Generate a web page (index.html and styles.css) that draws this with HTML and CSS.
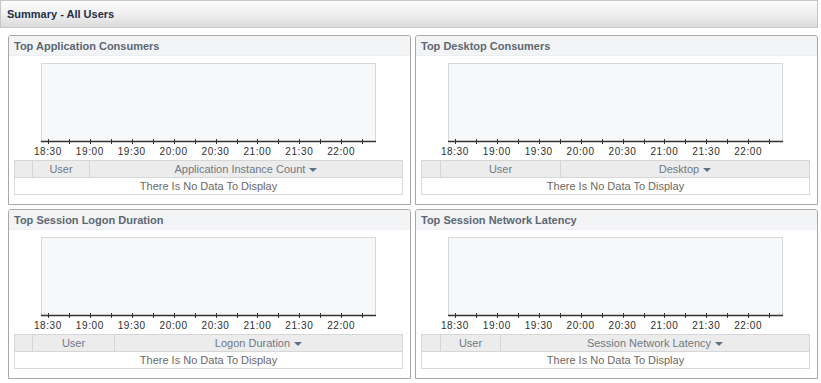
FILE: index.html
```html
<!DOCTYPE html>
<html>
<head>
<meta charset="utf-8">
<link rel="stylesheet" href="styles.css">
</head>
<body>
<div class="page">
  <div class="titlebar">Summary - All Users</div>
  <div class="grid">
    <section class="panel">
      <div class="panel-head">Top Application Consumers</div>
      <div class="chart">
        <div class="plot"></div>
        <svg class="axis" width="335" height="7" viewBox="0 0 335 7"><path d="M0 3.5H335" stroke="#333" stroke-width="1.3"/><path d="M7.5 1V6M28.5 1V6M49.5 1V6M70.5 1V6M91.5 1V6M112.5 1V6M133.5 1V6M154.5 1V6M175.5 1V6M196.5 1V6M216.5 1V6M237.5 1V6M258.5 1V6M279.5 1V6M300.5 1V6M321.5 1V6" stroke="#333" stroke-width="1"/></svg>
        <div class="labels"><span>18:30</span><span>19:00</span><span>19:30</span><span>20:00</span><span>20:30</span><span>21:00</span><span>21:30</span><span>22:00</span></div>
      </div>
      <table class="grid-table">
        <colgroup><col class="c-sel"><col class="c-user-a"><col></colgroup>
        <tr class="hdr"><th></th><th>User</th><th>Application Instance Count <i class="arrow"></i></th></tr>
        <tr class="row"><td colspan="3">There Is No Data To Display</td></tr>
      </table>
    </section>
    <section class="panel">
      <div class="panel-head">Top Desktop Consumers</div>
      <div class="chart">
        <div class="plot"></div>
        <svg class="axis" width="335" height="7" viewBox="0 0 335 7"><path d="M0 3.5H335" stroke="#333" stroke-width="1.3"/><path d="M7.5 1V6M28.5 1V6M49.5 1V6M70.5 1V6M91.5 1V6M112.5 1V6M133.5 1V6M154.5 1V6M175.5 1V6M196.5 1V6M216.5 1V6M237.5 1V6M258.5 1V6M279.5 1V6M300.5 1V6M321.5 1V6" stroke="#333" stroke-width="1"/></svg>
        <div class="labels"><span>18:30</span><span>19:00</span><span>19:30</span><span>20:00</span><span>20:30</span><span>21:00</span><span>21:30</span><span>22:00</span></div>
      </div>
      <table class="grid-table">
        <colgroup><col class="c-sel2"><col class="c-user-b"><col></colgroup>
        <tr class="hdr"><th></th><th>User</th><th>Desktop <i class="arrow"></i></th></tr>
        <tr class="row"><td colspan="3">There Is No Data To Display</td></tr>
      </table>
    </section>
    <section class="panel">
      <div class="panel-head">Top Session Logon Duration</div>
      <div class="chart">
        <div class="plot"></div>
        <svg class="axis" width="335" height="7" viewBox="0 0 335 7"><path d="M0 3.5H335" stroke="#333" stroke-width="1.3"/><path d="M7.5 1V6M28.5 1V6M49.5 1V6M70.5 1V6M91.5 1V6M112.5 1V6M133.5 1V6M154.5 1V6M175.5 1V6M196.5 1V6M216.5 1V6M237.5 1V6M258.5 1V6M279.5 1V6M300.5 1V6M321.5 1V6" stroke="#333" stroke-width="1"/></svg>
        <div class="labels"><span>18:30</span><span>19:00</span><span>19:30</span><span>20:00</span><span>20:30</span><span>21:00</span><span>21:30</span><span>22:00</span></div>
      </div>
      <table class="grid-table">
        <colgroup><col class="c-sel"><col class="c-user-c"><col></colgroup>
        <tr class="hdr"><th></th><th>User</th><th>Logon Duration <i class="arrow"></i></th></tr>
        <tr class="row"><td colspan="3">There Is No Data To Display</td></tr>
      </table>
    </section>
    <section class="panel">
      <div class="panel-head">Top Session Network Latency</div>
      <div class="chart">
        <div class="plot"></div>
        <svg class="axis" width="335" height="7" viewBox="0 0 335 7"><path d="M0 3.5H335" stroke="#333" stroke-width="1.3"/><path d="M7.5 1V6M28.5 1V6M49.5 1V6M70.5 1V6M91.5 1V6M112.5 1V6M133.5 1V6M154.5 1V6M175.5 1V6M196.5 1V6M216.5 1V6M237.5 1V6M258.5 1V6M279.5 1V6M300.5 1V6M321.5 1V6" stroke="#333" stroke-width="1"/></svg>
        <div class="labels"><span>18:30</span><span>19:00</span><span>19:30</span><span>20:00</span><span>20:30</span><span>21:00</span><span>21:30</span><span>22:00</span></div>
      </div>
      <table class="grid-table">
        <colgroup><col class="c-sel2"><col class="c-user-d"><col></colgroup>
        <tr class="hdr"><th></th><th>User</th><th>Session Network Latency <i class="arrow"></i></th></tr>
        <tr class="row"><td colspan="3">There Is No Data To Display</td></tr>
      </table>
    </section>
  </div>
</div>
</body>
</html>
```
FILE: styles.css
```css
html, body {
  margin: 0;
  padding: 0;
  background: #ffffff;
}
body {
  font-family: "Liberation Sans", Arial, sans-serif;
  font-size: 11px;
}
.page {
  width: 818px;
}
.titlebar {
  box-sizing: border-box;
  height: 28px;
  border: 1px solid #c6c6c6;
  background: linear-gradient(#fcfcfc 0%, #f1f1f1 45%, #dcdcdc 100%);
  font-weight: bold;
  font-size: 11px;
  color: #1f3047;
  padding-left: 6px;
  display: flex;
  align-items: center;
}
.grid {
  display: grid;
  grid-template-columns: 403px 403px;
  column-gap: 4px;
  row-gap: 4px;
  padding: 7px 0 0 8px;
}
.panel {
  box-sizing: border-box;
  height: 170px;
  border: 1px solid #a8a8a8;
  border-radius: 3px 3px 0 0;
  display: flex;
  flex-direction: column;
}
.panel-head {
  box-sizing: border-box;
  height: 20px;
  background: #f3f4f6;
  border-bottom: 1px solid #eceef1;
  font-weight: bold;
  font-size: 11px;
  color: #5d6773;
  padding-left: 5px;
  display: flex;
  align-items: center;
  border-radius: 2px 2px 0 0;
}
.chart {
  margin: 7px 0 0 32px;
  width: 335px;
  display: flex;
  flex-direction: column;
}
.plot {
  box-sizing: border-box;
  height: 78px;
  background: #f7f8fa;
  border: 1px solid #d8d8d8;
  border-bottom: none;
}
.axis {
  display: block;
  margin-top: -3px;
}
.labels {
  display: flex;
  margin-left: -14px;
  margin-top: 1px;
  height: 12px;
}
.labels span {
  width: 41.9px;
  flex: none;
  text-align: center;
  font-size: 10px;
  line-height: 12px;
  letter-spacing: 0.6px;
  color: #2e2e2e;
}
.grid-table {
  margin: 2px 0 0 5px;
  width: 389px;
  border-collapse: collapse;
  table-layout: fixed;
  border: 1px solid #d9d9d9;
}
.c-sel { width: 18px; }
.c-sel2 { width: 19px; }
.c-user-a { width: 57px; }
.c-user-b { width: 120px; }
.c-user-c { width: 82px; }
.c-user-d { width: 60px; }
.hdr th {
  height: 16px;
  padding: 0;
  background: #ececec;
  border: 1px solid #d6d6d6;
  font-weight: normal;
  font-size: 11px;
  color: #707985;
  text-align: center;
  line-height: 15px;
}
.row td {
  height: 16px;
  padding: 0;
  text-align: center;
  font-size: 11px;
  color: #6b6864;
  line-height: 15px;
}
.arrow {
  display: inline-block;
  width: 0;
  height: 0;
  border-left: 4px solid transparent;
  border-right: 4px solid transparent;
  border-top: 4px solid #5f7088;
  vertical-align: middle;
  margin-left: 1px;
}
```
